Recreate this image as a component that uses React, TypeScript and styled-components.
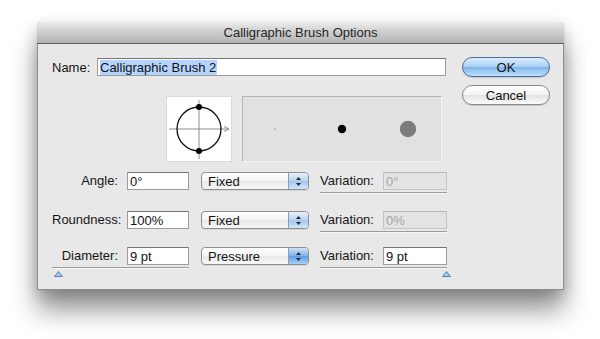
import React from "react";
import styled, { createGlobalStyle } from "styled-components";

const GlobalStyle = createGlobalStyle`
  html, body {
    margin: 0;
    padding: 0;
    background: #ffffff;
  }
  body {
    font-family: "Liberation Sans", Arial, sans-serif;
    font-size: 13px;
    color: #151515;
  }
`;

const Page = styled.div`
  width: 600px;
  height: 339px;
  padding: 22px 0 0 37px;
  box-sizing: border-box;
  overflow: hidden;
`;

const Window = styled.div`
  width: 527px;
  height: 268px;
  box-sizing: border-box;
  background: #e8e8e8;
  border: 1px solid #8c8c8c;
  border-top: none;
  border-radius: 5px 5px 0 0;
  box-shadow: 0 20px 26px rgba(0, 0, 0, 0.42), 0 4px 14px rgba(0, 0, 0, 0.18);
  display: flex;
  flex-direction: column;
`;

const TitleBar = styled.div`
  height: 21px;
  border-radius: 5px 5px 0 0;
  background: linear-gradient(#ececec, #cfcfcf 45%, #b3b3b3);
  border-bottom: 1px solid #5c5c5c;
  display: flex;
  align-items: center;
  justify-content: center;
  font-size: 13px;
  color: #262626;
  margin: 0 -1px;
`;

const Body = styled.div`
  display: flex;
  padding: 13px 13px 0 14px;
`;

const Main = styled.div`
  flex: 1;
  display: flex;
  flex-direction: column;
  padding-top: 1px;
`;

const Side = styled.div`
  width: 88px;
  margin-left: 15px;
  display: flex;
  flex-direction: column;
  gap: 8px;
`;

const PushButton = styled.button<{ $default?: boolean }>`
  height: 20px;
  border-radius: 10px;
  font-family: inherit;
  font-size: 13px;
  color: #111;
  padding: 0;
  border: 1px solid ${(p) => (p.$default ? "#4d6e9c" : "#8a8a8a")};
  background: ${(p) =>
    p.$default
      ? "linear-gradient(#dcecfd, #a9cff5 48%, #7fb5ea 52%, #bfe0ff)"
      : "linear-gradient(#ffffff, #f3f3f3 48%, #e2e2e2 52%, #fbfbfb)"};
  box-shadow: 0 1px 1px rgba(0, 0, 0, 0.15);
`;

const NameRow = styled.div`
  display: flex;
  align-items: center;
  height: 18px;
`;

const NameLabel = styled.span`
  width: 45px;
`;

const TextField = styled.div<{ $width: number; $disabled?: boolean }>`
  width: ${(p) => p.$width}px;
  height: 18px;
  box-sizing: border-box;
  border: 1px solid ${(p) => (p.$disabled ? "#c4c4c4" : "#9c9c9c")};
  border-top-color: ${(p) => (p.$disabled ? "#b8b8b8" : "#747474")};
  background: ${(p) => (p.$disabled ? "#e3e3e3" : "#ffffff")};
  color: ${(p) => (p.$disabled ? "#a3a3a3" : "#111")};
  display: flex;
  align-items: center;
  padding-left: 2px;
  font-size: 13px;
`;

const Selected = styled.span`
  background: #b5d4fd;
  padding-right: 1px;
`;

const PreviewRow = styled.div`
  display: flex;
  gap: 10px;
  margin: 20px 0 0 114px;
`;

const AngleBox = styled.div`
  width: 66px;
  height: 66px;
  box-sizing: border-box;
  background: #ffffff;
  border: 1px solid #dadada;
  display: flex;
`;

const StrokeBox = styled.div`
  width: 200px;
  height: 66px;
  box-sizing: border-box;
  background: #e1e1e1;
  border: 1px solid #b4b4b4;
  border-right-color: #f4f4f4;
  border-bottom-color: #f4f4f4;
  display: flex;
`;

const Row = styled.div<{ $top: number }>`
  display: flex;
  align-items: flex-start;
  margin-top: ${(p) => p.$top}px;
`;

const Label = styled.span`
  width: 66px;
  height: 18px;
  line-height: 18px;
  text-align: right;
  margin-right: 9px;
`;

const Labelled = styled.div`
  display: flex;
`;

const SliderBlock = styled.div<{ $width: number }>`
  width: ${(p) => p.$width}px;
  display: flex;
  flex-direction: column;
`;

const SliderLine = styled.div`
  height: 0;
  margin-top: 2px;
  border-top: 1px solid #9b9b9b;
  border-bottom: 1px solid #f7f7f7;
`;

const ThumbRow = styled.div<{ $end?: boolean }>`
  display: flex;
  justify-content: ${(p) => (p.$end ? "flex-end" : "flex-start")};
  margin: 2px ${(p) => (p.$end ? "-4px" : "0")} 0 ${(p) => (p.$end ? "0" : "2px")};
`;

const Popup = styled.div`
  width: 108px;
  height: 18px;
  box-sizing: border-box;
  margin-left: 12px;
  margin-right: 11px;
  border: 1px solid #8e8e8e;
  border-radius: 4px;
  background: linear-gradient(#ffffff, #f4f4f4 50%, #e9e9e9 51%, #f6f6f6);
  display: flex;
  align-items: center;
  overflow: hidden;
  box-shadow: 0 1px 0 rgba(0, 0, 0, 0.08);
`;

const PopupText = styled.span`
  flex: 1;
  padding-left: 6px;
`;

const Stepper = styled.div<{ $active?: boolean }>`
  width: 19px;
  align-self: stretch;
  border-left: 1px solid #8e9db0;
  background: ${(p) =>
    p.$active
      ? "linear-gradient(#cfe3fa, #7fb0ea 50%, #5f9be4 51%, #a8d0fb)"
      : "linear-gradient(#e7f0fb, #b7d2f0 50%, #a3c4ea 51%, #d3e6fb)"};
  display: flex;
  align-items: center;
  justify-content: center;
`;

const VarLabel = styled.span`
  width: 63px;
  height: 18px;
  line-height: 18px;
`;

const Thumb = () => (
  <svg width="9" height="6" viewBox="0 0 9 6">
    <path d="M4.5 0.5 L8.5 5.5 L0.5 5.5 Z" fill="#a9c8e8" stroke="#4f7fb4" strokeWidth="1" />
  </svg>
);

const Arrows = () => (
  <svg width="7" height="11" viewBox="0 0 7 11">
    <path d="M3.5 1 L6 4 L1 4 Z" fill="#1c2a3c" />
    <path d="M3.5 10 L6 7 L1 7 Z" fill="#1c2a3c" />
  </svg>
);

type FieldRowProps = {
  top: number;
  label: string;
  value: string;
  mode: string;
  variation: string;
};

const PopupMenu: React.FC<{ text: string; active?: boolean }> = ({ text, active }) => (
  <Popup>
    <PopupText>{text}</PopupText>
    <Stepper $active={active}>
      <Arrows />
    </Stepper>
  </Popup>
);

const FixedRow: React.FC<FieldRowProps> = ({ top, label, value, mode, variation }) => (
  <Row $top={top}>
    <Label>{label}</Label>
    <TextField $width={62}>{value}</TextField>
    <PopupMenu text={mode} />
    <SliderBlock $width={127}>
      <Labelled>
        <VarLabel>Variation:</VarLabel>
        <TextField $width={64} $disabled>
          {variation}
        </TextField>
      </Labelled>
      <SliderLine />
    </SliderBlock>
  </Row>
);

const PressureRow: React.FC<FieldRowProps> = ({ top, label, value, mode, variation }) => (
  <Row $top={top}>
    <SliderBlock $width={137}>
      <Labelled>
        <Label>{label}</Label>
        <TextField $width={62}>{value}</TextField>
      </Labelled>
      <SliderLine />
      <ThumbRow>
        <Thumb />
      </ThumbRow>
    </SliderBlock>
    <PopupMenu text={mode} active />
    <SliderBlock $width={127}>
      <Labelled>
        <VarLabel>Variation:</VarLabel>
        <TextField $width={64}>{variation}</TextField>
      </Labelled>
      <SliderLine />
      <ThumbRow $end>
        <Thumb />
      </ThumbRow>
    </SliderBlock>
  </Row>
);

const App: React.FC = () => {
  return (
    <Page>
      <GlobalStyle />
      <Window>
        <TitleBar>Calligraphic Brush Options</TitleBar>
        <Body>
          <Main>
            <NameRow>
              <NameLabel>Name:</NameLabel>
              <TextField $width={349}>
                <Selected>Calligraphic Brush 2</Selected>
              </TextField>
            </NameRow>

            <PreviewRow>
              <AngleBox>
                <svg width="64" height="64" viewBox="0 0 64 64">
                  <line x1="2" y1="32" x2="62" y2="32" stroke="#8c8c8c" strokeWidth="1" />
                  <path d="M57 29.5 L62 32 L57 34.5" fill="none" stroke="#8c8c8c" strokeWidth="1" />
                  <line x1="32" y1="3" x2="32" y2="62" stroke="#8c8c8c" strokeWidth="1" />
                  <circle cx="32" cy="32" r="22" fill="none" stroke="#111" strokeWidth="1.3" />
                  <circle cx="32" cy="10" r="3" fill="#000" />
                  <circle cx="32" cy="54" r="3" fill="#000" />
                </svg>
              </AngleBox>
              <StrokeBox>
                <svg width="198" height="64" viewBox="0 0 198 64">
                  <circle cx="32" cy="32" r="0.8" fill="#9a9a9a" />
                  <circle cx="99" cy="32" r="4.2" fill="#000" />
                  <circle cx="165" cy="32" r="8.2" fill="#7c7c7c" />
                </svg>
              </StrokeBox>
            </PreviewRow>

            <FixedRow top={10} label="Angle:" value="0°" mode="Fixed" variation="0°" />
            <FixedRow top={17} label="Roundness:" value="100%" mode="Fixed" variation="0%" />
            <PressureRow top={14} label="Diameter:" value="9 pt" mode="Pressure" variation="9 pt" />
          </Main>
          <Side>
            <PushButton $default>OK</PushButton>
            <PushButton>Cancel</PushButton>
          </Side>
        </Body>
      </Window>
    </Page>
  );
};

export default App;
